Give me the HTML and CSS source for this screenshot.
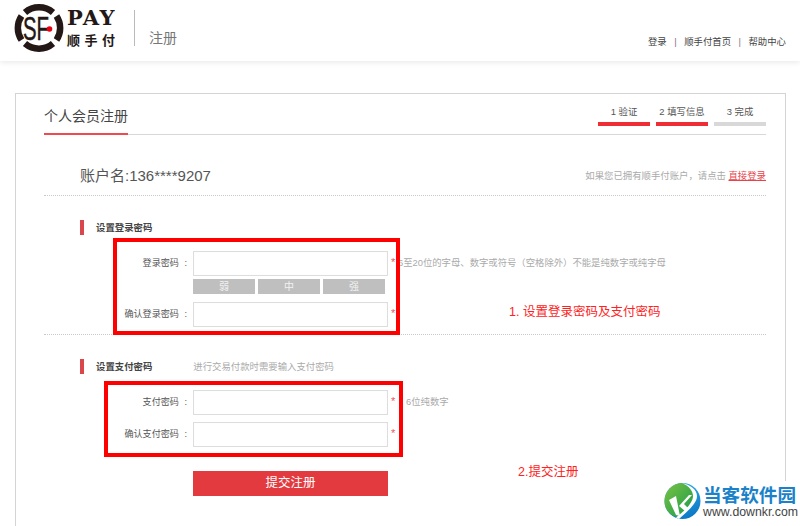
FILE: index.html
```html
<!DOCTYPE html>
<html lang="zh">
<head>
<meta charset="utf-8">
<title>注册</title>
<link rel="stylesheet" href="styles.css">
</head>
<body>
<header class="top">
  <div class="brand">
    <svg class="logo" width="52" height="52" viewBox="0 0 52 52">
      <g fill="none" stroke="#231815" stroke-width="6.5">
        <path d="M12 10.500A21.500 21.500 0 0 1 40 10.500"/>
        <path d="M43.500 14A21.500 21.500 0 0 1 43.500 38"/>
        <path d="M40 41.500A21.500 21.500 0 0 1 12 41.500"/>
        <path d="M8.500 38A21.500 21.500 0 0 1 8.500 14"/>
      </g>
      <text x="10" y="38" class="logo-sf" textLength="26" lengthAdjust="spacingAndGlyphs">SF</text>
      <circle cx="36.500" cy="27" r="2.800" fill="#e60012"/>
    </svg>
    <div class="wordmark">
      <span class="pay">PAY</span>
      <span class="cn">顺手付</span>
    </div>
    <div class="divider"></div>
    <span class="page-name">注册</span>
  </div>
  <nav class="links"><a>登录</a><i>|</i><a>顺手付首页</a><i>|</i><a>帮助中心</a></nav>
</header>

<main class="panel">
  <div class="panel-head">
    <h1>个人会员注册</h1>
    <ol class="steps">
      <li class="on">1 验证</li>
      <li class="on">2 填写信息</li>
      <li>3 完成</li>
    </ol>
  </div>

  <div class="account">
    <span class="account-name">账户名:136****9207</span>
    <span class="login-tip">如果您已拥有顺手付账户，请点击 <a>直接登录</a></span>
  </div>

  <section class="group group-login">
    <h2>设置登录密码</h2>
    <div class="row">
      <label>登录密码 :</label><div class="field"></div><b>*</b>
      <span class="hint hint-tight">6至20位的字母、数字或符号（空格除外）不能是纯数字或纯字母</span>
    </div>
    <div class="strength"><span>弱</span><span>中</span><span>强</span></div>
    <div class="row">
      <label>确认登录密码 :</label><div class="field"></div><b>*</b>
    </div>
  </section>

  <section class="group group-pay">
    <h2>设置支付密码<small>进行交易付款时需要输入支付密码</small></h2>
    <div class="row">
      <label>支付密码 :</label><div class="field"></div><b>*</b>
      <span class="hint">6位纯数字</span>
    </div>
    <div class="row row-second">
      <label>确认支付密码 :</label><div class="field"></div><b>*</b>
    </div>
    <div class="submit">提交注册</div>
  </section>
</main>

<div class="mark mark-a"></div>
<div class="mark mark-b"></div>
<p class="note note-a">1. 设置登录密码及支付密码</p>
<p class="note note-b">2.提交注册</p>

<div class="badge">
  <svg class="badge-icon" width="40" height="40" viewBox="0 0 40 40">
    <defs>
      <linearGradient id="green" x1="0" y1="0" x2="1" y2="1">
        <stop offset="0" stop-color="#7cc242"/>
        <stop offset="1" stop-color="#149a4a"/>
      </linearGradient>
      <linearGradient id="blue" x1="0.300" y1="0" x2="0.700" y2="1">
        <stop offset="0" stop-color="#35b0e8"/>
        <stop offset="1" stop-color="#0a76c4"/>
      </linearGradient>
    </defs>
    <circle cx="20.500" cy="20" r="18" fill="url(#blue)"/>
    <path d="M2.500 20A18 18 0 0 1 20 2C28 4 33 9 33 14 33 21 26 28 15 36 7 34 2.500 28 2.500 20z" fill="url(#green)"/>
    <path d="M20 2C29 4 35 9 35 15 35 22 27 29 17 38L14 36.500C25 28 31 21 31 15 31 10 27 5 20 2z" fill="#fff"/>
    <path d="M7 19L14 15 18 35 14 34zM17 25L27 14 30 14 22 23 26 27 23 30z" fill="#fff"/>
  </svg>
  <div class="badge-text">
    <span class="badge-cn">当客软件园</span>
    <span class="badge-url">www.downkr.com</span>
  </div>
</div>
</body>
</html>
```
FILE: styles.css
```css
* { box-sizing: border-box; }
html, body { margin: 0; height: 526px; overflow: hidden; background: #fff; }
body {
  position: relative;
  width: 800px;
  font-family: "Liberation Sans", "Noto Sans CJK SC", sans-serif;
  font-size: 9.4px;
  color: #555;
}
.top {
  height: 61px;
  display: flex;
  justify-content: space-between;
  align-items: flex-start;
  padding: 2px 14px 0 13px;
  box-shadow: 0 1px 6px rgba(0, 0, 0, .10);
}
.brand { display: flex; align-items: flex-start; }
.logo { display: block; }
.logo-sf {
  font-family: "Liberation Sans", sans-serif;
  font-size: 33px;
  fill: #231815;
  stroke: #231815;
  stroke-width: .5px;
}
.wordmark { display: flex; flex-direction: column; margin: 5px 0 0 2px; width: 50px; color: #231815; }
.pay {
  font-family: "DejaVu Serif", serif;
  font-weight: 700;
  font-size: 21px;
  line-height: 22px;
  letter-spacing: 1.5px;
}
.cn {
  font-family: "Noto Sans CJK SC", sans-serif;
  font-weight: 700;
  font-size: 13px;
  line-height: 16px;
  letter-spacing: 4.5px;
  margin-top: 3px;
  white-space: nowrap;
}
.divider { width: 1px; height: 36px; background: #bbb; margin: 8px 14px 0 17px; }
.page-name { font-size: 14px; color: #777; line-height: 20px; margin-top: 26px; }
.links { margin-top: 34px; line-height: 12px; color: #444; }
.links i { font-style: normal; margin: 0 7.5px; color: #85708a; }

.panel {
  margin: 32px 14px 0 15px;
  height: 433px;
  border: 1px solid #d4d4d4;
  border-bottom: 0;
  padding: 0 19px 0 28px;
}
.panel-head {
  height: 41px;
  display: flex;
  justify-content: space-between;
  border-bottom: 1px solid #d8d8d8;
}
.panel-head h1 {
  margin: 0 0 -1px;
  height: 41px;
  padding-top: 11px;
  font-size: 14px;
  line-height: 22px;
  font-weight: 400;
  color: #444;
  border-bottom: 2px solid #ee4a50;
}
.steps { list-style: none; margin: 0; padding: 9px 0 0; display: flex; gap: 6px; }
.steps li {
  width: 52px;
  height: 23px;
  text-align: center;
  line-height: 17px;
  color: #555;
  border-bottom: 4px solid #d8d8d8;
}
.steps li.on { border-bottom-color: #ee2d35; }

.account {
  height: 61px;
  padding: 30px 0 0 36px;
  display: flex;
  justify-content: space-between;
  border-bottom: 1px dotted #c8c8c8;
}
.account-name { font-size: 15px; line-height: 22px; color: #555; }
.login-tip { color: #aaa; line-height: 22px; }
.login-tip a { color: #e8434a; text-decoration: underline; }

.group { padding-left: 36px; }
.group h2 {
  margin: 0;
  height: 15px;
  padding-left: 12px;
  border-left: 4px solid #d9474c;
  font-size: 9.4px;
  line-height: 15px;
  font-weight: 700;
  color: #444;
}
.group h2 small { margin-left: 41px; font-size: 9.4px; font-weight: 400; color: #aaa; }
.group-login { height: 139px; padding-top: 24px; border-bottom: 1px dotted #c8c8c8; }
.group-pay { padding-top: 24px; }
.group-login .row:first-of-type { margin-top: 16px; }
.group-pay .row { margin-top: 16px; }
.group-pay .row-second { margin-top: 7px; }
.row { display: flex; align-items: center; height: 25px; }
.row label {
  width: 113px;
  padding: 0 6px 3px 0;
  text-align: right;
  font-size: 9.1px;
  word-spacing: 3px;
  color: #555;
  white-space: nowrap;
}
.field {
  width: 195px;
  height: 25px;
  border: 1px solid #ddd;
  box-shadow: inset 0 0 1px #eee;
  background: #fff;
}
.row b { color: #e8555c; font-size: 11px; font-weight: 400; margin: 0 0 4px 3px; width: 6px; }
.hint { color: #aaa; margin-left: 9px; padding-bottom: 3px; font-size: 9.35px; white-space: nowrap; }
.hint-tight { margin-left: 1px; }
.strength { display: flex; gap: 3px; margin: 3px 0 8px 113px; width: 193px; }
.strength span {
  width: 62px;
  height: 15px;
  background: #bfbfbf;
  color: #f2f2f2;
  font-size: 10px;
  text-align: center;
  line-height: 15px;
}
.submit {
  width: 195px;
  height: 25px;
  margin: 24px 0 0 113px;
  background: #e33a3f;
  color: #fff;
  font-size: 12.5px;
  line-height: 25px;
  text-align: center;
}

.mark { position: absolute; border: 4px solid #f00; }
.mark-a { left: 113px; top: 238px; width: 287px; height: 97px; }
.mark-b { left: 104px; top: 381px; width: 299px; height: 76px; }
.note { position: absolute; margin: 0; color: #f22; font-size: 12.5px; line-height: 16px; }
.note-a { left: 509px; top: 304px; }
.note-b { left: 518px; top: 464px; }

.badge {
  position: absolute;
  left: 662px;
  top: 481px;
  width: 138px;
  height: 45px;
  background: #fff;
  display: flex;
  align-items: flex-start;
  gap: 1px;
}
.badge-icon { display: block; flex: none; }
.badge-text { display: flex; flex-direction: column; margin-top: 5px; }
.badge-cn { color: #1b82c9; font-size: 18.6px; line-height: 20px; font-weight: 700; white-space: nowrap; }
.badge-url { color: #444; font-size: 12.3px; line-height: 13px; white-space: nowrap; }
```
